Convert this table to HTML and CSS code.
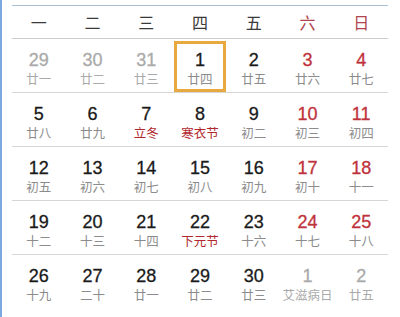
FILE: index.html
```html
<!DOCTYPE html>
<html lang="zh">
<head>
<meta charset="utf-8">
<link rel="stylesheet" href="styles.css">
</head>
<body>
<div class="page">
  <div class="cal">
    <div class="head">
      <span>一</span><span>二</span><span>三</span><span>四</span><span>五</span><span class="we">六</span><span class="we">日</span>
    </div>
    <div class="week">
      <div class="cell other"><b>29</b><i>廿一</i></div>
      <div class="cell other"><b>30</b><i>廿二</i></div>
      <div class="cell other"><b>31</b><i>廿三</i></div>
      <div class="cell today"><b>1</b><i>廿四</i></div>
      <div class="cell"><b>2</b><i>廿五</i></div>
      <div class="cell we"><b>3</b><i>廿六</i></div>
      <div class="cell we"><b>4</b><i>廿七</i></div>
    </div>
    <div class="week">
      <div class="cell"><b>5</b><i>廿八</i></div>
      <div class="cell"><b>6</b><i>廿九</i></div>
      <div class="cell"><b>7</b><i class="fest">立冬</i></div>
      <div class="cell"><b>8</b><i class="fest">寒衣节</i></div>
      <div class="cell"><b>9</b><i>初二</i></div>
      <div class="cell we"><b>10</b><i>初三</i></div>
      <div class="cell we"><b>11</b><i>初四</i></div>
    </div>
    <div class="week">
      <div class="cell"><b>12</b><i>初五</i></div>
      <div class="cell"><b>13</b><i>初六</i></div>
      <div class="cell"><b>14</b><i>初七</i></div>
      <div class="cell"><b>15</b><i>初八</i></div>
      <div class="cell"><b>16</b><i>初九</i></div>
      <div class="cell we"><b>17</b><i>初十</i></div>
      <div class="cell we"><b>18</b><i>十一</i></div>
    </div>
    <div class="week">
      <div class="cell"><b>19</b><i>十二</i></div>
      <div class="cell"><b>20</b><i>十三</i></div>
      <div class="cell"><b>21</b><i>十四</i></div>
      <div class="cell"><b>22</b><i class="fest">下元节</i></div>
      <div class="cell"><b>23</b><i>十六</i></div>
      <div class="cell we"><b>24</b><i>十七</i></div>
      <div class="cell we"><b>25</b><i>十八</i></div>
    </div>
    <div class="week last">
      <div class="cell"><b>26</b><i>十九</i></div>
      <div class="cell"><b>27</b><i>二十</i></div>
      <div class="cell"><b>28</b><i>廿一</i></div>
      <div class="cell"><b>29</b><i>廿二</i></div>
      <div class="cell"><b>30</b><i>廿三</i></div>
      <div class="cell other"><b>1</b><i>艾滋病日</i></div>
      <div class="cell other"><b>2</b><i>廿五</i></div>
    </div>
  </div>
</div>
</body>
</html>
```

FILE: styles.css
```css
html, body {
  margin: 0;
  padding: 0;
  background: #ffffff;
}

.page {
  height: 317px;
  box-sizing: border-box;
  border-left: 2px solid #7ba8e0;
  padding: 5px 12px 0 10px;
  overflow: hidden;
}

.cal {
  width: 376px;
  border-top: 1px solid #a8bfd4;
}

.head {
  display: grid;
  grid-template-columns: repeat(7, 1fr);
  height: 32px;
  border-bottom: 1px solid #cccccc;
  font-family: "Noto Sans CJK SC", sans-serif;
  font-size: 16px;
  color: #3a3a3a;
}

.head span {
  display: flex;
  align-items: center;
  justify-content: center;
}

.head .we {
  color: #b0454c;
}

.week {
  display: grid;
  grid-template-columns: repeat(7, 1fr);
  height: 53px;
  border-bottom: 1px solid #d6d6d6;
}

.week.last {
  border-bottom: none;
}

.cell {
  display: flex;
  flex-direction: column;
  align-items: center;
  padding-top: 11px;
  box-sizing: border-box;
}

.cell b {
  font-family: "Liberation Sans", Arial, sans-serif;
  font-weight: normal;
  font-size: 18px;
  line-height: 20px;
  color: #1a1a1a;
  -webkit-text-stroke: 0.3px currentColor;
}

.cell i {
  font-style: normal;
  font-family: "Noto Sans CJK SC", sans-serif;
  font-size: 12.5px;
  line-height: 14px;
  margin-top: 2px;
  color: #8c8c8c;
}

.cell.we b {
  color: #c0323b;
}

.cell.other b {
  color: #aaaaaa;
}

.cell.other i {
  color: #aaaaaa;
}

.cell i.fest {
  color: #b0282e;
}

.cell.today {
  margin: 2px 1px 0 1px;
  padding-top: 9px;
  box-shadow: inset 0 0 0 3px #e8aa3e;
}
```
